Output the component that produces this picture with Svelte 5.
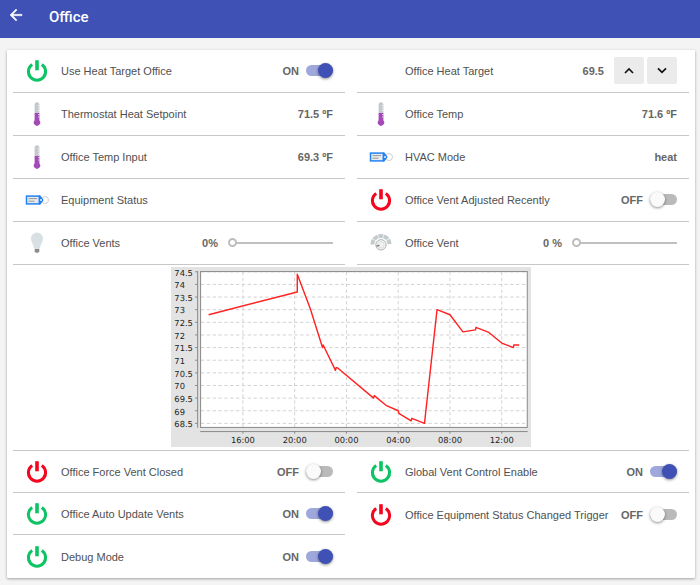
<script>
  let heatTarget = $state(69.5);

  const left = [
    { id: 'use-heat', icon: 'power', label: 'Use Heat Target Office', kind: 'switch', on: true },
    { id: 'setpoint', icon: 'thermo', label: 'Thermostat Heat Setpoint', kind: 'value', value: '71.5 ºF' },
    { id: 'temp-input', icon: 'thermo', label: 'Office Temp Input', kind: 'value', value: '69.3 ºF' },
    { id: 'equipment', icon: 'tag', label: 'Equipment Status', kind: 'value', value: '' },
    { id: 'vents', icon: 'bulb', label: 'Office Vents', kind: 'slider', value: '0%' }
  ];
  const right = [
    { id: 'heat-target', icon: '', label: 'Office Heat Target', kind: 'stepper' },
    { id: 'temp', icon: 'thermo', label: 'Office Temp', kind: 'value', value: '71.6 ºF' },
    { id: 'hvac', icon: 'tag', label: 'HVAC Mode', kind: 'value', value: 'heat' },
    { id: 'adjusted', icon: 'power', label: 'Office Vent Adjusted Recently', kind: 'switch', on: false },
    { id: 'vent', icon: 'dial', label: 'Office Vent', kind: 'slider', value: '0 %' }
  ];
  const lowerLeft = [
    { id: 'force', icon: 'power', label: 'Office Force Vent Closed', kind: 'switch', on: false },
    { id: 'auto', icon: 'power', label: 'Office Auto Update Vents', kind: 'switch', on: true },
    { id: 'debug', icon: 'power', label: 'Debug Mode', kind: 'switch', on: true }
  ];
  const lowerRight = [
    { id: 'global', icon: 'power', label: 'Global Vent Control Enable', kind: 'switch', on: true },
    { id: 'trigger', icon: 'power', label: 'Office Equipment Status Changed Trigger', kind: 'switch', on: false }
  ];

  let switches = $state(
    Object.fromEntries(
      [...left, ...right, ...lowerLeft, ...lowerRight]
        .filter((r) => r.kind === 'switch')
        .map((r) => [r.id, r.on])
    )
  );

  // Chart scales: hours since midnight and degrees to drawing units.
  const cx = (h) => 86.3 + (h - 16) * 15.53;
  const cy = (t) => 20.9 + (74 - t) * 30.32;
  const temps = Array.from({ length: 13 }, (_, i) => 74.5 - i * 0.5);
  const hours = [16, 20, 24, 28, 32, 36];
  const series = [
    [13.35, 72.8], [20.2, 73.7], [20.2, 74.4], [21.2, 73.05], [22.15, 71.5], [22.2, 71.6], [23.15, 70.6],
    [23.2, 70.7], [23.3, 70.7], [26.1, 69.5], [26.15, 69.6], [27.1, 69.2], [28, 69], [28.05, 68.9],
    [29, 68.6], [29.05, 68.7], [30.03, 68.5], [31.0, 73], [32, 72.8], [33, 72.12], [33.97, 72.2],
    [34, 72.3], [35, 72.1], [36, 71.68], [36.9, 71.5], [36.93, 71.6], [37.35, 71.6]
  ];
  const points = series.map(([h, t]) => `${cx(h)},${cy(t)}`).join(' ');
  const clock = (h) => String(h % 24).padStart(2, '0') + ':00';
</script>

{#snippet icon(name, on)}
  <span class="icon">
    {#if name === 'power'}
      <svg width="24" height="24" viewBox="0 0 24 24" fill="none" stroke={on ? '#0cc464' : '#f3061e'} aria-hidden="true">
        <path d="M7.2 5.4A8.6 8.6 0 1 0 16.8 5.4" stroke-width="3" />
        <path d="M12 1.2V11.3" stroke-width="3.6" />
      </svg>
    {:else if name === 'thermo'}
      <svg width="24" height="24" viewBox="0 0 24 24" aria-hidden="true">
        <path d="M9.6 11V2.6a2.4 2.4 0 0 1 4.8 0V11z" fill="#c3c9cc" />
        <path d="M9.6 11h4.8v7.4a3.2 3.2 0 1 1-4.8 0z" fill="#a349b8" />
        <path d="M13 3.500h1.400M13 6h1.400M13 8.500h1.400" stroke="#f4f5f6" />
        <path d="M13 12.500h1.400M13 15h1.400" stroke="#e6cbec" />
      </svg>
    {:else if name === 'tag'}
      <svg width="24" height="24" viewBox="0 0 24 24" fill="none" aria-hidden="true">
        <circle cx="20" cy="12" r="3.5" stroke="#cfcfcf" />
        <path d="M14 7.500h1.500L18.600 12l-3.100 4.500H14z" fill="#2182f3" />
        <rect x="1.500" y="8.100" width="12.800" height="7.800" fill="#e8ebee" stroke="#2182f3" stroke-width="1.500" />
        <circle cx="16" cy="12" r=".9" fill="#fff" />
        <path d="M3.500 10.600h8.500M3.500 13.200h6" stroke="#999" />
      </svg>
    {:else if name === 'bulb'}
      <svg width="24" height="24" viewBox="0 0 24 24" aria-hidden="true">
        <path d="M12 1.500a6 6 0 0 1 6 6c0 3.600-2.400 5-3 9.800H9C8.400 12.500 6 11.100 6 7.500a6 6 0 0 1 6-6z" fill="#d9e0e4" />
        <path d="M9.700 17.700h4.600v2.800l-1.200 1.200h-2.200l-1.200-1.200z" fill="#8c8c8c" />
      </svg>
    {:else if name === 'dial'}
      <svg width="24" height="24" viewBox="0 0 24 24" fill="none" aria-hidden="true">
        <path d="M3.400 13.500a8.600 8.600 0 0 1 17.200 0" stroke="#c3cbce" stroke-width="4" stroke-dasharray="4.800 0.600" />
        <circle cx="12" cy="13.800" r="5.200" fill="#f1f1f1" stroke="#b4b4b4" />
        <circle cx="12" cy="13.800" r="3.200" stroke="#dedede" />
        <path d="M7.500 15.100l3-.8" stroke="#777" stroke-width="1.200" />
      </svg>
    {/if}
  </span>
{/snippet}

{#snippet row(r)}
  <div class="row">
    {@render icon(r.icon, switches[r.id])}
    {#if r.kind === 'switch'}
      <label class="name" for={r.id}>{r.label}</label>
      <span class="value">{switches[r.id] ? 'ON' : 'OFF'}</span>
      <input class="switch" id={r.id} type="checkbox" role="switch" bind:checked={switches[r.id]} />
    {:else if r.kind === 'slider'}
      <label class="name" for={r.id}>{r.label}</label>
      <span class="value">{r.value}</span>
      <input class="slider" id={r.id} type="range" min="0" max="100" value="0" />
    {:else if r.kind === 'stepper'}
      <span class="name">{r.label}</span>
      <span class="value">{heatTarget}</span>
      <span class="steps">
        <button aria-label="Raise target" onclick={() => (heatTarget += 0.5)}>
          <svg width="16" height="16" viewBox="0 0 24 24" aria-hidden="true"><path d="M6 15l6-6 6 6" /></svg>
        </button>
        <button aria-label="Lower target" onclick={() => (heatTarget -= 0.5)}>
          <svg width="16" height="16" viewBox="0 0 24 24" aria-hidden="true"><path d="M6 8l6 6 6-6" /></svg>
        </button>
      </span>
    {:else}
      <span class="name">{r.label}</span>
      <span class="value">{r.value}</span>
    {/if}
  </div>
{/snippet}

<div class="page">
  <header>
    <a href="#back" aria-label="Back">
      <svg width="18" height="18" viewBox="0 0 24 24" aria-hidden="true">
        <path d="M20 11H7.830l5.590-5.590L12 4l-8 8 8 8 1.410-1.410L7.830 13H20z" fill="#fff" stroke="#fff" stroke-width=".6" />
      </svg>
    </a>
    <h1>Office</h1>
  </header>

  <main>
    <div class="columns upper">
      <div class="column">{#each left as r (r.id)}{@render row(r)}{/each}</div>
      <div class="column">{#each right as r (r.id)}{@render row(r)}{/each}</div>
    </div>

    <div class="chart">
      <svg width="360" height="180" viewBox="0 0 432 216" role="img" aria-label="Office temperature over the last day">
        <rect width="432" height="216" fill="#e3e3e3" />
        <rect x="35.500" y="5.500" width="392" height="187" fill="#fff" />
        <g stroke="#d2d2d2" stroke-width="1.200" stroke-dasharray="4 3">
          {#each temps as t (t)}<path d="M36 {cy(t)}H427" />{/each}
          {#each hours as h (h)}<path d="M{cx(h)} 6V192" />{/each}
        </g>
        <g stroke="#888" stroke-width="1.200" fill="none">
          <rect x="35.500" y="5.500" width="392" height="187" />
          <path d="M32 5V193M35 197.500H428" />
          {#each temps as t (t)}<path d="M29 {cy(t)}H32" />{/each}
          {#each hours as h (h)}<path d="M{cx(h)} 197V200" />{/each}
        </g>
        <polyline {points} fill="none" stroke="#f22" stroke-width="1.700" stroke-linejoin="round" />
        <g class="ticks">
          {#each temps as t (t)}<text x="4" y={cy(t) + 4.5}>{t}</text>{/each}
          {#each hours as h (h)}<text x={cx(h)} y="211" text-anchor="middle">{clock(h)}</text>{/each}
        </g>
      </svg>
    </div>

    <div class="columns last">
      <div class="column">{#each lowerLeft as r (r.id)}{@render row(r)}{/each}</div>
      <div class="column">{#each lowerRight as r (r.id)}{@render row(r)}{/each}</div>
    </div>
  </main>
</div>

<style>
  :global(body) {
    margin: 0;
    background: #f4f4f4;
  }
  .page {
    font-family: 'Liberation Sans', Arial, sans-serif;
    font-size: 11px;
    line-height: 16px;
    color: #505050;
  }
  header {
    display: flex;
    align-items: flex-start;
    gap: 24px;
    min-height: 32px;
    padding: 6px 7px 0;
    background: #3f51b5;
    color: #fff;
  }
  header a {
    display: flex;
  }
  h1 {
    margin: 0;
    font-family: Roboto, sans-serif;
    font-size: 15px;
    font-weight: 500;
    line-height: 22px;
  }
  main {
    margin: 12px 5px 7px 7px;
    padding: 0 6px;
    background: #fff;
    border-radius: 1px;
    box-shadow: 0 1px 3px rgba(0, 0, 0, 0.35);
  }
  .columns {
    display: flex;
    gap: 12px;
  }
  .column {
    flex: 1;
    min-width: 0;
  }
  .row {
    display: flex;
    align-items: center;
    box-sizing: border-box;
    min-height: 43px;
    padding: 0 12px;
    border-bottom: 1px solid #c8c8c8;
  }
  .upper .row {
    padding-bottom: 1px;
  }
  .last .row {
    min-height: 42px;
  }
  .last .row:last-child {
    min-height: 43px;
    border-bottom: 0;
  }
  .icon {
    display: flex;
    flex: none;
    width: 24px;
    margin-right: 12px;
  }
  .name {
    flex: 1;
    white-space: nowrap;
  }
  .value {
    font-weight: 700;
    white-space: nowrap;
    color: #666;
  }
  .switch {
    appearance: none;
    position: relative;
    flex: none;
    width: 27px;
    height: 11px;
    margin: 0 0 0 7px;
    border-radius: 6px;
    background: #bababa;
  }
  .switch::before {
    content: '';
    position: absolute;
    top: -2px;
    left: 0;
    width: 15px;
    height: 15px;
    border-radius: 50%;
    background: #fafafa;
    box-shadow: 0 1px 3px rgba(0, 0, 0, 0.45);
  }
  .switch:checked {
    background: #9fa8da;
  }
  .switch:checked::before {
    left: 12px;
    background: #3f51b5;
  }
  .slider {
    appearance: none;
    flex: none;
    width: 105px;
    height: 9px;
    margin: 0 0 0 10px;
    background: linear-gradient(#c0c0c0, #c0c0c0) 5px 50% / 100% 2px no-repeat;
  }
  .slider::-webkit-slider-thumb {
    appearance: none;
    box-sizing: border-box;
    width: 9px;
    height: 9px;
    border: 2px solid #bdbdbd;
    border-radius: 50%;
    background: #fff;
  }
  .steps {
    display: flex;
    gap: 3px;
    margin-left: 10px;
  }
  button {
    display: flex;
    align-items: center;
    justify-content: center;
    width: 30px;
    height: 27px;
    padding: 0;
    border: 0;
    border-radius: 2px;
    background: #ebebeb;
  }
  button path {
    fill: none;
    stroke: #111;
    stroke-width: 2.5;
  }
  .chart {
    display: flex;
    justify-content: center;
    padding: 2px 0 3px;
    border-bottom: 1px solid #c8c8c8;
  }
  .ticks {
    font-family: 'DejaVu Sans', sans-serif;
    font-size: 10px;
    text-rendering: geometricPrecision;
    fill: #222;
  }
</style>
